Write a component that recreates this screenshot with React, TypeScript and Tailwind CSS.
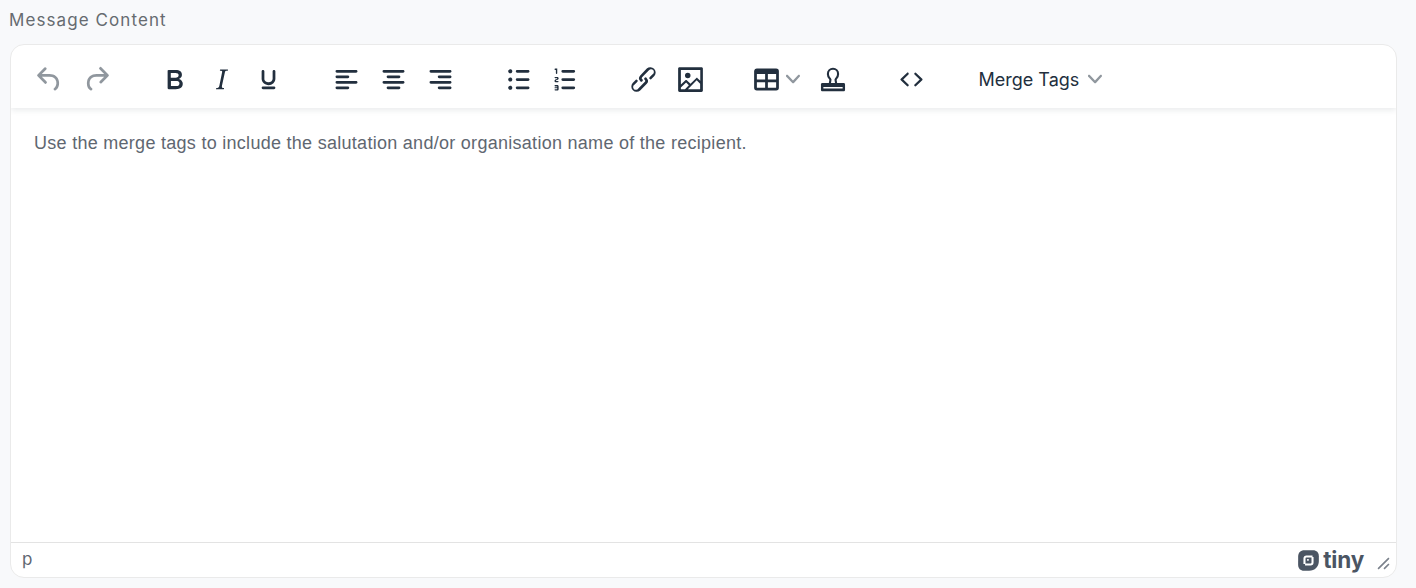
const D = "#222f3e";
const P: Record<string, string> = {
  undo: "M6.4 8H12c3.7 0 6.2 2 6.8 5.1.6 2.7-.4 5.6-2.3 6.8a1 1 0 0 1-1-1.8c1.1-.6 1.8-2.7 1.4-4.6-.5-2.1-2.1-3.5-4.9-3.5H6.4l3.3 3.3a1 1 0 1 1-1.4 1.4l-5-5a1 1 0 0 1 0-1.4l5-5a1 1 0 0 1 1.4 1.4L6.4 8Z",
  redo: "M17.6 10H12c-2.8 0-4.4 1.4-4.9 3.5-.4 2 .3 4 1.4 4.6a1 1 0 1 1-1 1.8c-2-1.2-2.9-4.1-2.3-6.8.6-3 3-5.1 6.8-5.1h5.6l-3.3-3.3a1 1 0 1 1 1.4-1.4l5 5a1 1 0 0 1 0 1.4l-5 5a1 1 0 0 1-1.4-1.4l3.3-3.3Z",
  bold: "M7.8 19c-.3 0-.5 0-.6-.2l-.2-.5V5.7c0-.2 0-.4.2-.5l.6-.2h5c1.5 0 2.7.3 3.5 1 .7.6 1.1 1.4 1.1 2.5a3 3 0 0 1-.6 1.9c-.4.6-1 1-1.6 1.2.4.1.9.3 1.3.6s.8.7 1 1.2c.4.4.5 1 .5 1.6 0 1.3-.4 2.3-1.3 3-.8.7-2.1 1-3.8 1H7.8Zm5-8.3c.6 0 1.2-.1 1.6-.5.4-.3.6-.7.6-1.3 0-1.1-.8-1.7-2.3-1.7H9.3v3.5h3.4Zm.5 6c.7 0 1.3-.1 1.7-.4.4-.4.6-.9.6-1.5s-.2-1-.7-1.4c-.4-.3-1-.4-2-.4H9.4v3.8h4Z",
  italic: "m16.7 4.7-.1.9h-.3c-.6 0-1 0-1.4.3-.3.3-.4.6-.5 1.1l-2.1 9.8v.6c0 .5.4.8 1.4.8h.2l-.2.8H8l.2-.8h.2c1.1 0 1.8-.5 2-1.5l2-9.8.1-.5c0-.6-.4-.8-1.4-.8h-.3l.2-.9h5.8Z",
  underline: "M16 5c.6 0 1 .4 1 1v5.5a4 4 0 0 1-.4 1.8l-1 1.4a5.3 5.3 0 0 1-5.5 1 5 5 0 0 1-1.6-1c-.5-.4-.8-.9-1.1-1.4a4 4 0 0 1-.4-1.8V6c0-.6.4-1 1-1s1 .4 1 1v5.5c0 .3 0 .6.2 1l.6.7a3.3 3.3 0 0 0 2.2.8 3.4 3.4 0 0 0 2.2-.8c.3-.2.4-.5.6-.8l.2-.9V6c0-.6.4-1 1-1ZM8 17h8c.6 0 1 .4 1 1s-.4 1-1 1H8a1 1 0 0 1 0-2Z",
  left: "M5 5h14c.6 0 1 .4 1 1s-.4 1-1 1H5a1 1 0 1 1 0-2Zm0 4h8c.6 0 1 .4 1 1s-.4 1-1 1H5a1 1 0 1 1 0-2Zm0 8h8c.6 0 1 .4 1 1s-.4 1-1 1H5a1 1 0 0 1 0-2Zm0-4h14c.6 0 1 .4 1 1s-.4 1-1 1H5a1 1 0 0 1 0-2Z",
  center: "M5 5h14c.6 0 1 .4 1 1s-.4 1-1 1H5a1 1 0 1 1 0-2Zm3 4h8c.6 0 1 .4 1 1s-.4 1-1 1H8a1 1 0 1 1 0-2Zm0 8h8c.6 0 1 .4 1 1s-.4 1-1 1H8a1 1 0 0 1 0-2Zm-3-4h14c.6 0 1 .4 1 1s-.4 1-1 1H5a1 1 0 0 1 0-2Z",
  right: "M5 5h14c.6 0 1 .4 1 1s-.4 1-1 1H5a1 1 0 1 1 0-2Zm6 4h8c.6 0 1 .4 1 1s-.4 1-1 1h-8a1 1 0 0 1 0-2Zm0 8h8c.6 0 1 .4 1 1s-.4 1-1 1h-8a1 1 0 0 1 0-2Zm-6-4h14c.6 0 1 .4 1 1s-.4 1-1 1H5a1 1 0 0 1 0-2Z",
  bullet: "M11 5h8c.6 0 1 .4 1 1s-.4 1-1 1h-8a1 1 0 0 1 0-2Zm0 6h8c.6 0 1 .4 1 1s-.4 1-1 1h-8a1 1 0 0 1 0-2Zm0 6h8c.6 0 1 .4 1 1s-.4 1-1 1h-8a1 1 0 0 1 0-2ZM4.500 6c0-.4.1-.8.4-1 .3-.4.7-.5 1.100-.5s.8.1 1 .4c.4.3.5.7.5 1.100s-.1.8-.4 1c-.3.4-.7.5-1.100.5s-.8-.1-1-.4c-.4-.3-.5-.7-.5-1.100Zm0 6c0-.4.1-.8.4-1 .3-.4.7-.5 1.100-.5s.8.1 1 .4c.4.3.5.7.5 1.100s-.1.8-.4 1c-.3.4-.7.5-1.100.5s-.8-.1-1-.4c-.4-.3-.5-.7-.5-1.100Zm0 6c0-.4.1-.8.4-1 .3-.4.7-.5 1.100-.5s.8.1 1 .4c.4.3.5.7.5 1.100s-.1.8-.4 1c-.3.4-.7.5-1.100.5s-.8-.1-1-.4c-.4-.3-.5-.7-.5-1.100Z",
  num: "M10 17h8c.6 0 1 .4 1 1s-.4 1-1 1h-8a1 1 0 0 1 0-2Zm0-6h8c.6 0 1 .4 1 1s-.4 1-1 1h-8a1 1 0 0 1 0-2Zm0-6h8c.6 0 1 .4 1 1s-.4 1-1 1h-8a1 1 0 1 1 0-2ZM6 4v3.500c0 .3-.2.5-.5.5a.5.5 0 0 1-.5-.5V5h-.5a.5.5 0 0 1 0-1H6Zm-1 8.800.2.2h1.300c.3 0 .5.2.5.5s-.2.5-.5.5H4.900a1 1 0 0 1-.9-1V13c0-.4.3-.8.6-1l1.200-.4.2-.3a.2.2 0 0 0-.2-.2H4.500a.5.5 0 0 1-.5-.5c0-.3.2-.5.5-.5h1.600c.5 0 .9.4.9 1v.1c0 .4-.3.8-.6 1l-1.200.4-.2.3ZM7 17v2c0 .6-.4 1-1 1H4.500a.5.5 0 0 1 0-1h1.200c.2 0 .3-.1.3-.3 0-.2-.1-.3-.3-.3H4.400a.4.4 0 1 1 0-.8h1.300c.2 0 .3-.1.3-.3 0-.2-.1-.3-.3-.3H4.500a.5.5 0 1 1 0-1H6c.6 0 1 .4 1 1Z",
  link: "M6.200 12.300a1 1 0 0 1 1.400 1.400l-2 2a2 2 0 1 0 2.600 2.800l4.800-4.800a1 1 0 0 0 0-1.400 1 1 0 1 1 1.400-1.300 2.900 2.900 0 0 1 0 4L9.600 20a3.900 3.900 0 0 1-5.500-5.500l2-2Zm11.600-.6a1 1 0 0 1-1.400-1.400l2-2a2 2 0 1 0-2.600-2.800L11 10.300a1 1 0 0 0 0 1.400A1 1 0 1 1 9.600 13a2.900 2.900 0 0 1 0-4L14.400 4a3.900 3.900 0 0 1 5.500 5.500l-2 2Z",
  image: "m5 15.700 3.300-3.200c.3-.3.7-.3 1 0L12 15l4.100-4c.3-.4.8-.4 1 0l2 1.900V5H5v10.700ZM5 18V19h3l2.800-2.900-2-2L5 17.900Zm14-3-2.500-2.400-6.400 6.500H19v-4ZM4 3h16c.6 0 1 .4 1 1v16c0 .6-.4 1-1 1H4a1 1 0 0 1-1-1V4c0-.6.4-1 1-1Zm6 8a2 2 0 1 0 0-4 2 2 0 0 0 0 4Z",
  table: "M19 4a2 2 0 0 1 2 2v12a2 2 0 0 1-2 2H5a2 2 0 0 1-2-2V6c0-1.100.9-2 2-2h14Zm0 10h-6v4h6v-4Zm-8 0H5v4h6v-4Zm8-6h-6v4h6V8Zm-8 0H5v4h6V8Z",
  code: "M9.800 15.700c.3.3.3.8 0 1-.3.4-.9.4-1.200 0l-4.400-4.100a.8.8 0 0 1 0-1.200l4.400-4.200c.3-.3.9-.3 1.200 0 .3.3.3.8 0 1.100L6 12l3.800 3.700ZM14.200 15.700c-.3.3-.3.8 0 1 .4.4.9.4 1.200 0l4.400-4.100c.3-.3.3-.9 0-1.200l-4.400-4.200a.8.8 0 0 0-1.200 0c-.3.3-.3.8 0 1.100L18 12l-3.800 3.700Z",
};

function Icon({ d, muted }: { d: string; muted?: boolean }) {
  return (
    <svg viewBox="0 0 24 24" className="w-[33px] h-[33px]" fill={muted ? "#222f3e80" : D}>
      <path d={d} />
    </svg>
  );
}

function Btn({ name, muted }: { name: string; muted?: boolean }) {
  return (
    <div className="w-[47px] h-[47px] flex items-center justify-center">
      <Icon d={P[name]} muted={muted} />
    </div>
  );
}

function Chevron({ cls }: { cls: string }) {
  return (
    <svg viewBox="0 0 10 10" className={cls} fill="#222f3e80">
      <path d="M8.700 2.200c.3-.3.8-.3 1 0 .4.4.4.9 0 1.200L5.700 7.800c-.3.3-.9.3-1.200 0L.2 3.400a.8.8 0 0 1 0-1.200c.3-.3.8-.3 1.100 0L5 6l3.700-3.800Z" />
    </svg>
  );
}

function Stamp() {
  return (
    <div className="w-[47px] h-[47px] flex items-center justify-center">
      <svg viewBox="0 0 24 24" className="w-[34px] h-[34px]" fill="none" stroke={D}>
        <path strokeWidth="1.500" d="M9.800 15.300c0-1.500.6-2.200.3-3-.2-.7-1.700-1.600-1.700-3.900a3.600 3.600 0 0 1 7.200 0c0 2.300-1.500 3.200-1.700 3.900-.3.8.3 1.500.3 3" />
        <path fill={D} stroke="none" d="M4.500 14.800h15c.6 0 1 .4 1 1v4.200c0 .3-.3.600-.6.600H4.100c-.3 0-.6-.3-.6-.6v-4.200c0-.6.4-1 1-1Z" />
        <path stroke="#fff" strokeWidth="1" d="M5.200 18.200h13.600" />
      </svg>
    </div>
  );
}

export default function App() {
  return (
    <div className="w-[1416px] h-[588px] bg-[#f8f9fb] pl-[9px] pr-[19px] pt-[10px] overflow-hidden">
      <div className="text-[17px] leading-[21px] tracking-[1.08px] text-[#666b70] h-[34px] font-['Inter',sans-serif]">
        Message Content
      </div>
      <div className="ml-px h-[534px] rounded-[14px] border-[1.5px] border-[#eaeaea] bg-white flex flex-col overflow-hidden">
        <div className="h-[63px] shrink-0 flex items-center gap-[31px] pl-[14.500px] pt-[5px] shadow-[0_2px_6px_rgba(34,47,62,0.1)] relative">
          <div className="flex"><Btn name="undo" muted /><Btn name="redo" muted /></div>
          <div className="flex"><Btn name="bold" /><Btn name="italic" /><Btn name="underline" /></div>
          <div className="flex"><Btn name="left" /><Btn name="center" /><Btn name="right" /></div>
          <div className="flex"><Btn name="bullet" /><Btn name="num" /></div>
          <div className="flex"><Btn name="link" /><Btn name="image" /></div>
          <div className="flex">
            <div className="h-[47px] flex items-center pl-[5.500px] pr-[9.500px]">
              <Icon d={P.table} />
              <Chevron cls="w-[14px] h-[14px] ml-[3px]" />
            </div>
            <Stamp />
          </div>
          <div className="flex"><Btn name="code" /></div>
          <div className="flex h-[47px] items-center pl-[13px]">
            <span className="text-[18px] text-[#222f3e] font-['Inter',sans-serif]">Merge Tags</span>
            <Chevron cls="w-[14px] h-[14px] ml-[9px]" />
          </div>
        </div>
        <div className="flex-1 pl-[23px] pt-[22px] text-[18px] leading-[26px] tracking-[0.28px] text-[#5f6771] font-['Liberation_Sans',sans-serif]">
          Use the merge tags to include the salutation and/or organisation name of the recipient.
        </div>
        <div className="h-[35px] shrink-0 border-t border-[#e3e3e3] flex items-center justify-between pl-[11px] pr-[6px]">
          <span className="text-[17px] text-[#5f6771] font-['Inter',sans-serif]">p</span>
          <div className="flex items-center gap-[13px]">
            <div className="flex items-center gap-[3px]">
              <svg viewBox="0 0 20 20" className="w-[23px] h-[23px]">
                <path fill="#4b5563" d="M6.500 1h7.500c3 0 5 2 5 5v4.500c0 5-3.500 8.500-8.500 8.500H6c-3 0-5-2-5-5V6.500C1 3 3 1 6.500 1Z" />
                <path fill="none" stroke="#fff" strokeWidth="1.800" d="M6.500 13V8.200c0-1 .7-1.700 1.700-1.700h5.300M13.500 7v4.800c0 1-.7 1.700-1.700 1.700H7" />
                <path fill="#fff" d="M8.800 8.800h1.400v1.400H8.800z" />
              </svg>
              <span className="text-[22.500px] leading-none font-bold text-[#4b5563] font-['Inter',sans-serif] tracking-[-0.2px]">tiny</span>
            </div>
            <svg viewBox="0 0 12 12" className="w-[13px] h-[13px] mt-[6px]" stroke="#7b828c" strokeWidth="1.500">
              <path d="M1 11 11 1M6.500 11l4.500-4.500" />
            </svg>
          </div>
        </div>
      </div>
    </div>
  );
}
